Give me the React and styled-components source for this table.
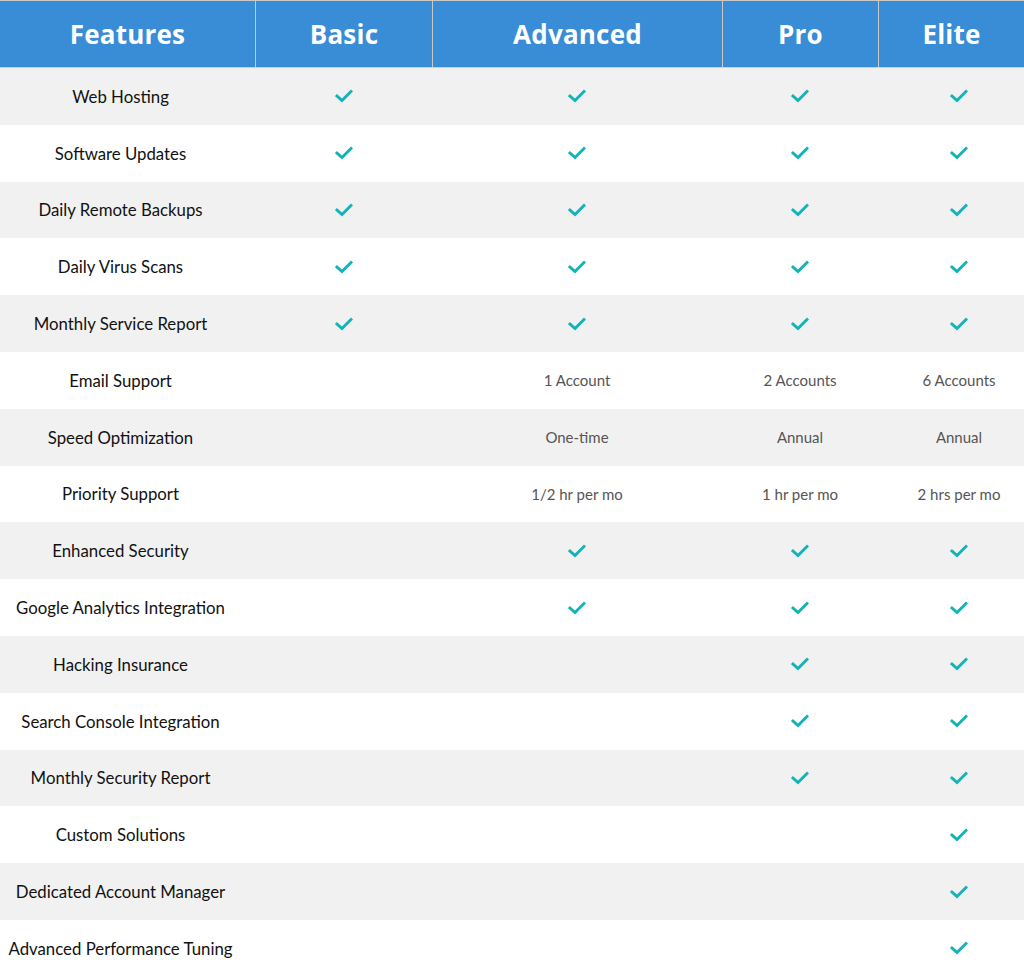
import React from "react";
import styled, { createGlobalStyle } from "styled-components";

const GlobalStyle = createGlobalStyle`
  html, body {
    margin: 0;
    padding: 0;
    background: #fff;
  }
  body {
    font-family: Lato, "Noto Sans", sans-serif;
    overflow: hidden;
  }
`;

const COLS = "255px 177px 290px 156px 162px";

const Table = styled.div`
  width: 1040px;
  display: flex;
  flex-direction: column;
`;

const HeaderRow = styled.div`
  display: grid;
  grid-template-columns: ${COLS};
  height: 68px;
  box-sizing: border-box;
  background: #398cd6;
  border-top: 1px solid #c9c9c9;
  border-bottom: 1px solid #d0d0d0;
`;

const HeadCell = styled.div`
  display: flex;
  align-items: center;
  justify-content: center;
  color: #fff;
  font-family: "Open Sans", Lato, sans-serif;
  font-weight: 700;
  font-size: 26px;
  letter-spacing: 0.2px;
  padding-right: ${(p) => (p.$last ? "16px" : "0")};
  border-left: ${(p) => (p.$first ? "none" : "1px solid #c9c9c9")};
`;

const Row = styled.div`
  display: grid;
  grid-template-columns: ${COLS};
  height: 56.8px;
  background: ${(p) => (p.$shaded ? "#f1f1f1" : "#ffffff")};
`;

const FeatureCell = styled.div`
  display: flex;
  align-items: center;
  justify-content: center;
  padding-right: 14px;
  color: #111;
  font-size: 16.8px;
  white-space: nowrap;
`;

const ValueCell = styled.div`
  display: flex;
  align-items: center;
  justify-content: center;
  color: #555;
  font-size: 15px;
  white-space: nowrap;
`;

const Check = () => (
  <svg width="18" height="14" viewBox="0 0 18 14">
    <path
      d="M2 7 L7 11.5 L16 2.5"
      fill="none"
      stroke="#13b3b8"
      strokeWidth="3"
      strokeLinecap="square"
    />
  </svg>
);

const C = true;
const rows = [
  ["Web Hosting", [C, C, C, C]],
  ["Software Updates", [C, C, C, C]],
  ["Daily Remote Backups", [C, C, C, C]],
  ["Daily Virus Scans", [C, C, C, C]],
  ["Monthly Service Report", [C, C, C, C]],
  ["Email Support", [null, "1 Account", "2 Accounts", "6 Accounts"]],
  ["Speed Optimization", [null, "One-time", "Annual", "Annual"]],
  ["Priority Support", [null, "1/2 hr per mo", "1 hr per mo", "2 hrs per mo"]],
  ["Enhanced Security", [null, C, C, C]],
  ["Google Analytics Integration", [null, C, C, C]],
  ["Hacking Insurance", [null, null, C, C]],
  ["Search Console Integration", [null, null, C, C]],
  ["Monthly Security Report", [null, null, C, C]],
  ["Custom Solutions", [null, null, null, C]],
  ["Dedicated Account Manager", [null, null, null, C]],
  ["Advanced Performance Tuning", [null, null, null, C]],
];

const headers = ["Features", "Basic", "Advanced", "Pro", "Elite"];

export default function App() {
  return (
    <>
      <GlobalStyle />
      <Table>
        <HeaderRow>
          {headers.map((h, i) => (
            <HeadCell key={h} $first={i === 0} $last={i === headers.length - 1}>
              {h}
            </HeadCell>
          ))}
        </HeaderRow>
        {rows.map(([name, cells], i) => (
          <Row key={name} $shaded={i % 2 === 0}>
            <FeatureCell>{name}</FeatureCell>
            {cells.map((c, j) => (
              <ValueCell key={j}>
                {c === true ? <Check /> : c}
              </ValueCell>
            ))}
          </Row>
        ))}
      </Table>
    </>
  );
}
